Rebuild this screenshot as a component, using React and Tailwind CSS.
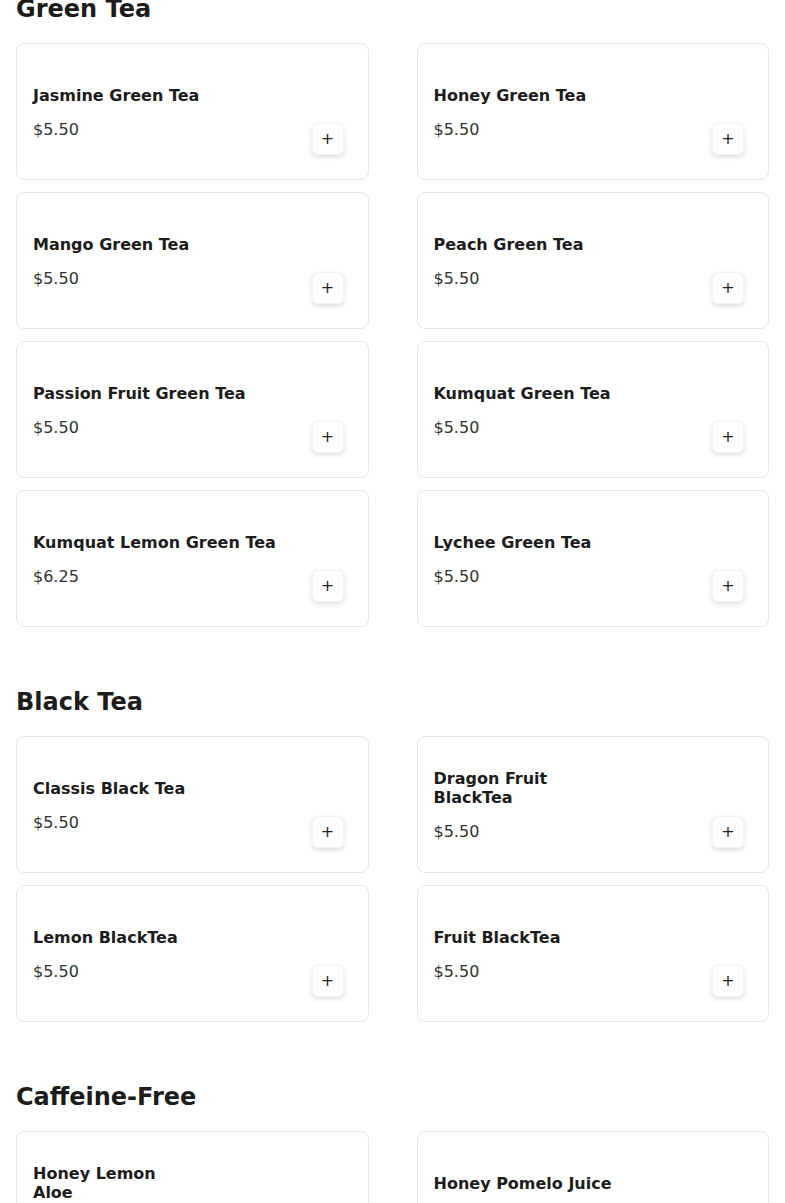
import React from 'react'

const menu = [
  {
    title: 'Green Tea',
    items: [
      { name: 'Jasmine Green Tea', price: '$5.50' },
      { name: 'Honey Green Tea', price: '$5.50' },
      { name: 'Mango Green Tea', price: '$5.50' },
      { name: 'Peach Green Tea', price: '$5.50' },
      { name: 'Passion Fruit Green Tea', price: '$5.50' },
      { name: 'Kumquat Green Tea', price: '$5.50' },
      { name: 'Kumquat Lemon Green Tea', price: '$6.25' },
      { name: 'Lychee Green Tea', price: '$5.50' },
    ],
  },
  {
    title: 'Black Tea',
    items: [
      { name: 'Classis Black Tea', price: '$5.50' },
      { name: ['Dragon Fruit', 'BlackTea'], price: '$5.50' },
      { name: 'Lemon BlackTea', price: '$5.50' },
      { name: 'Fruit BlackTea', price: '$5.50' },
    ],
  },
  {
    title: 'Caffeine-Free',
    items: [
      { name: ['Honey Lemon', 'Aloe'], price: '$5.50' },
      { name: 'Honey Pomelo Juice', price: '$5.50' },
    ],
  },
]

const ItemCard = ({ item }) => {
  const lines = Array.isArray(item.name) ? item.name : [item.name]
  return (
    <div className="flex h-[137px] justify-between rounded-lg border border-gray-200 bg-white p-4">
      <div className="flex flex-col justify-center pt-1">
        <h3 className="text-base font-bold leading-[19px] text-[#1c1c1c]">
          {lines.map((l, i) => (
            <span key={i} className="block">{l}</span>
          ))}
        </h3>
        <p className="mt-[13px] text-base leading-6 text-[#333]">{item.price}</p>
      </div>
      <button className="mb-2 mr-2 flex h-8 w-8 items-center justify-center self-end rounded-md border border-gray-100 bg-white text-base leading-none text-[#222] shadow-[0_2px_5px_rgba(0,0,0,0.14)]">
        +
      </button>
    </div>
  )
}

export default function App() {
  return (
    <div className="min-h-screen bg-white px-4 font-['DejaVu_Sans',sans-serif] text-[#1c1c1c]">
      <div className="-mt-[7px] flex flex-col gap-[59px]">
        {menu.map((section) => (
          <section key={section.title}>
            <h2 className="mb-[18px] text-2xl font-bold text-[#1c1c1c]">{section.title}</h2>
            <div className="grid grid-cols-2 gap-x-12 gap-y-3">
              {section.items.map((item, i) => (
                <ItemCard key={i} item={item} />
              ))}
            </div>
          </section>
        ))}
      </div>
    </div>
  )
}
